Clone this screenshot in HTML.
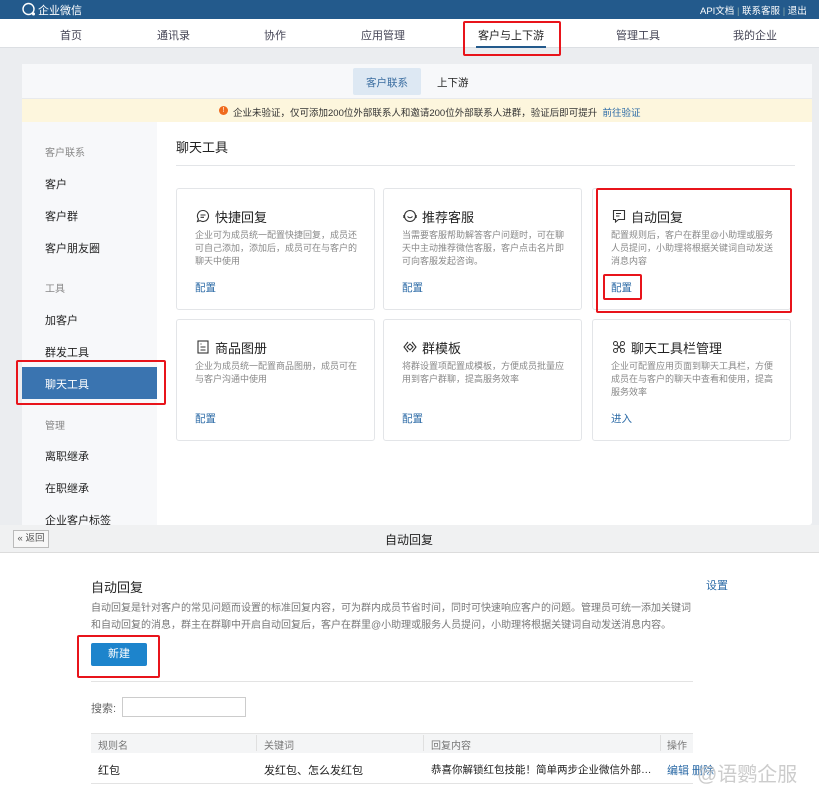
<!DOCTYPE html>
<html><head><meta charset="utf-8"><style>
*{margin:0;padding:0;box-sizing:border-box}
body{width:819px;height:800px;overflow:hidden;font-family:"Liberation Sans","Noto Sans CJK SC",sans-serif;background:#ebedf0;position:relative;color:#333}
.a{position:absolute;white-space:nowrap}
.red{position:absolute;border:2px solid #e8141b;border-radius:2px}
.card{position:absolute;background:#fff;border:1px solid #e3e5e8;border-radius:3px;width:199px;height:122px}
.card .t{position:absolute;left:38px;top:18px;font-size:13px;color:#222}
.card .ic{position:absolute;left:19px;top:20px;width:14px;height:14px}
.card .d{position:absolute;left:18px;top:40px;width:163px;font-size:9px;line-height:13px;color:#888;white-space:normal}
.card .l{position:absolute;left:18px;top:91px;font-size:10.5px;color:#2b6aa6}
.side{font-size:11px;color:#222;left:45px}
.side.g{color:#888;font-size:10px}
</style></head><body>
<div class="a" style="left:0;top:0;width:819px;height:19px;background:#235a8c"></div>
<svg class="a" style="left:21px;top:2px" width="16" height="15" viewBox="0 0 16 15"><circle cx="7.5" cy="7" r="5.5" fill="none" stroke="#fff" stroke-width="1.4"/><circle cx="12.5" cy="12" r="1.5" fill="#fff"/></svg>
<div class="a" style="left:38px;top:2px;font-size:11px;color:#fff">企业微信</div>
<div class="a" style="left:700px;top:3px;font-size:9.5px;color:#fff">API文档 <span style="color:#8aa">|</span> 联系客服 <span style="color:#8aa">|</span> 退出</div>
<div class="a" style="left:0;top:19px;width:819px;height:29px;background:#fff;border-bottom:1px solid #dcdfe3"></div>
<div class="a" style="left:60px;top:27px;font-size:11px;color:#445">首页</div>
<div class="a" style="left:157px;top:27px;font-size:11px;color:#445">通讯录</div>
<div class="a" style="left:264px;top:27px;font-size:11px;color:#445">协作</div>
<div class="a" style="left:361px;top:27px;font-size:11px;color:#445">应用管理</div>
<div class="a" style="left:478px;top:27px;font-size:11px;color:#222">客户与上下游</div>
<div class="a" style="left:476px;top:46px;width:70px;height:2px;background:#235a8c"></div>
<div class="a" style="left:616px;top:27px;font-size:11px;color:#445">管理工具</div>
<div class="a" style="left:733px;top:27px;font-size:11px;color:#445">我的企业</div>
<div class="red" style="left:463px;top:21px;width:98px;height:35px"></div>

<div class="a" style="left:22px;top:64px;width:790px;height:461px;background:#fff;border-radius:3px"></div>
<div class="a" style="left:22px;top:64px;width:790px;height:35px;background:#f7f8fa;border-bottom:1px solid #e8eaed"></div>
<div class="a" style="left:353px;top:68px;width:68px;height:27px;background:#dde8f3;border-radius:2px"></div>
<div class="a" style="left:366px;top:75px;font-size:10.5px;color:#3a6da0">客户联系</div>
<div class="a" style="left:437px;top:75px;font-size:10.5px;color:#222">上下游</div>
<div class="a" style="left:22px;top:99px;width:790px;height:23px;background:#fdf6dd"></div>
<div class="a" style="left:219px;top:106px;width:9px;height:9px;border-radius:50%;background:#f06a1c;color:#fff;font-size:7px;text-align:center;line-height:9px">!</div>
<div class="a" style="left:233px;top:105px;font-size:9.5px;color:#333">企业未验证，仅可添加200位外部联系人和邀请200位外部联系人进群，验证后即可提升 &nbsp;<span style="color:#2b6aa6">前往验证</span></div>

<div class="a" style="left:22px;top:122px;width:135px;height:403px;background:#f7f8fa"></div>
<div class="a side g" style="top:144px">客户联系</div>
<div class="a side" style="top:176px">客户</div>
<div class="a side" style="top:208px">客户群</div>
<div class="a side" style="top:240px">客户朋友圈</div>
<div class="a side g" style="top:280px">工具</div>
<div class="a side" style="top:312px">加客户</div>
<div class="a side" style="top:344px">群发工具</div>
<div class="a" style="left:22px;top:367px;width:135px;height:32px;background:#3a74b0"></div>
<div class="a side" style="top:376px;color:#fff">聊天工具</div>
<div class="red" style="left:16px;top:360px;width:150px;height:45px"></div>
<div class="a side g" style="top:417px">管理</div>
<div class="a side" style="top:448px">离职继承</div>
<div class="a side" style="top:480px">在职继承</div>
<div class="a side" style="top:512px">企业客户标签</div>

<div class="a" style="left:176px;top:137px;font-size:13px;color:#222">聊天工具</div>
<div class="a" style="left:176px;top:165px;width:619px;height:1px;background:#e3e5e8"></div>

<div class="card" style="left:176px;top:188px"><svg class="ic" viewBox="0 0 14 14"><path d="M7 1.5a5.5 5.5 0 1 1-3 10.1L1.5 12.5l.9-2.4A5.5 5.5 0 0 1 7 1.5z" fill="none" stroke="#333" stroke-width="1.1"/><path d="M4.5 6h5M4.5 8.3h3.5" stroke="#333" stroke-width="1.1"/></svg><div class="t">快捷回复</div><div class="d">企业可为成员统一配置快捷回复，成员还可自己添加，添加后，成员可在与客户的聊天中使用</div><div class="l">配置</div></div>
<div class="card" style="left:383px;top:188px"><svg class="ic" viewBox="0 0 14 14"><circle cx="7" cy="7" r="5.5" fill="none" stroke="#333" stroke-width="1.1"/><path d="M4.5 7.5q2.5 2.5 5 0" fill="none" stroke="#333" stroke-width="1.1"/><path d="M1 6v3M13 6v3" stroke="#333" stroke-width="1.4"/></svg><div class="t">推荐客服</div><div class="d">当需要客服帮助解答客户问题时，可在聊天中主动推荐微信客服，客户点击名片即可向客服发起咨询。</div><div class="l">配置</div></div>
<div class="card" style="left:592px;top:188px"><svg class="ic" viewBox="0 0 14 14"><path d="M1.5 1.5h11v9h-6l-3 2.5v-2.5h-2z" fill="none" stroke="#333" stroke-width="1.1"/><path d="M4 4.5h5M4 7h3.5" stroke="#333" stroke-width="1.1"/></svg><div class="t">自动回复</div><div class="d">配置规则后，客户在群里@小助理或服务人员提问，小助理将根据关键词自动发送消息内容</div><div class="l">配置</div></div>
<div class="red" style="left:596px;top:188px;width:196px;height:125px"></div>
<div class="red" style="left:603px;top:274px;width:39px;height:26px"></div>

<div class="card" style="left:176px;top:319px"><svg class="ic" viewBox="0 0 14 14"><rect x="2" y="1" width="10" height="12" fill="none" stroke="#333" stroke-width="1.1"/><path d="M4.5 4h1M4.5 7h5M4.5 10h5" stroke="#333" stroke-width="1.1"/></svg><div class="t">商品图册</div><div class="d">企业为成员统一配置商品图册，成员可在与客户沟通中使用</div><div class="l">配置</div></div>
<div class="card" style="left:383px;top:319px"><svg class="ic" viewBox="0 0 14 14"><path d="M5 2L1 7l4 5M9 2l4 5-4 5M7 4l3 3-3 3-3-3z" fill="none" stroke="#333" stroke-width="1.1"/></svg><div class="t">群模板</div><div class="d">将群设置项配置成模板，方便成员批量应用到客户群聊，提高服务效率</div><div class="l">配置</div></div>
<div class="card" style="left:592px;top:319px"><svg class="ic" viewBox="0 0 14 14"><circle cx="3.5" cy="3.5" r="2" fill="none" stroke="#333"/><circle cx="10.5" cy="3.5" r="2" fill="none" stroke="#333"/><circle cx="3.5" cy="10.5" r="2" fill="none" stroke="#333"/><circle cx="10.5" cy="10.5" r="2" fill="none" stroke="#333"/><path d="M5 5l4 4M9 5l-4 4" stroke="#333"/></svg><div class="t">聊天工具栏管理</div><div class="d">企业可配置应用页面到聊天工具栏，方便成员在与客户的聊天中查看和使用，提高服务效率</div><div class="l">进入</div></div>

<div class="a" style="left:0;top:525px;width:819px;height:275px;background:#fff"></div>
<div class="a" style="left:0;top:525px;width:819px;height:28px;background:#f0f1f2;border-bottom:1px solid #dcdcdc"></div>
<div class="a" style="left:13px;top:530px;width:36px;height:18px;border:1px solid #bbb;background:#f7f7f7;font-size:9.5px;color:#555;text-align:center;line-height:16px">« 返回</div>
<div class="a" style="left:385px;top:531px;font-size:12px;color:#222">自动回复</div>
<div class="a" style="left:91px;top:577px;font-size:13px;color:#222">自动回复</div>
<div class="a" style="left:706px;top:577px;font-size:11px;color:#2b6aa6">设置</div>
<div class="a" style="left:91px;top:600px;font-size:10px;line-height:17px;color:#777">自动回复是针对客户的常见问题而设置的标准回复内容，可为群内成员节省时间，同时可快速响应客户的问题。管理员可统一添加关键词<br>和自动回复的消息，群主在群聊中开启自动回复后，客户在群里@小助理或服务人员提问，小助理将根据关键词自动发送消息内容。</div>
<div class="a" style="left:91px;top:643px;width:56px;height:23px;background:#1d84cc;border-radius:2px;color:#fff;font-size:11px;text-align:center;line-height:23px">新建</div>
<div class="red" style="left:77px;top:635px;width:83px;height:43px"></div>
<div class="a" style="left:91px;top:681px;width:602px;height:1px;background:#e3e3e3"></div>
<div class="a" style="left:91px;top:700px;font-size:11px;color:#666">搜索:</div>
<div class="a" style="left:122px;top:697px;width:124px;height:20px;border:1px solid #ccc"></div>
<div class="a" style="left:91px;top:733px;width:602px;height:20px;background:#f4f5f6;border-top:1px solid #e3e3e3"></div>
<div class="a" style="left:98px;top:737px;font-size:10px;color:#777">规则名</div>
<div class="a" style="left:256px;top:735px;width:1px;height:16px;background:#e0e0e0"></div>
<div class="a" style="left:264px;top:737px;font-size:10px;color:#777">关键词</div>
<div class="a" style="left:423px;top:735px;width:1px;height:16px;background:#e0e0e0"></div>
<div class="a" style="left:431px;top:737px;font-size:10px;color:#777">回复内容</div>
<div class="a" style="left:660px;top:735px;width:1px;height:16px;background:#e0e0e0"></div>
<div class="a" style="left:667px;top:737px;font-size:10px;color:#777">操作</div>
<div class="a" style="left:98px;top:762px;font-size:11px;color:#222">红包</div>
<div class="a" style="left:264px;top:762px;font-size:11px;color:#222">发红包、怎么发红包</div>
<div class="a" style="left:431px;top:762px;font-size:10.5px;color:#222;width:228px;overflow:hidden;text-overflow:ellipsis">恭喜你解锁红包技能！简单两步企业微信外部群也能发红包</div>
<div class="a" style="left:667px;top:762px;font-size:11px;color:#2b6aa6">编辑 删除</div>
<div class="a" style="left:91px;top:783px;width:602px;height:1px;background:#e3e3e3"></div>
<div class="a" style="left:697px;top:758px;font-size:20px;color:rgba(195,195,195,0.85)">@语鹦企服</div>
</body></html>
